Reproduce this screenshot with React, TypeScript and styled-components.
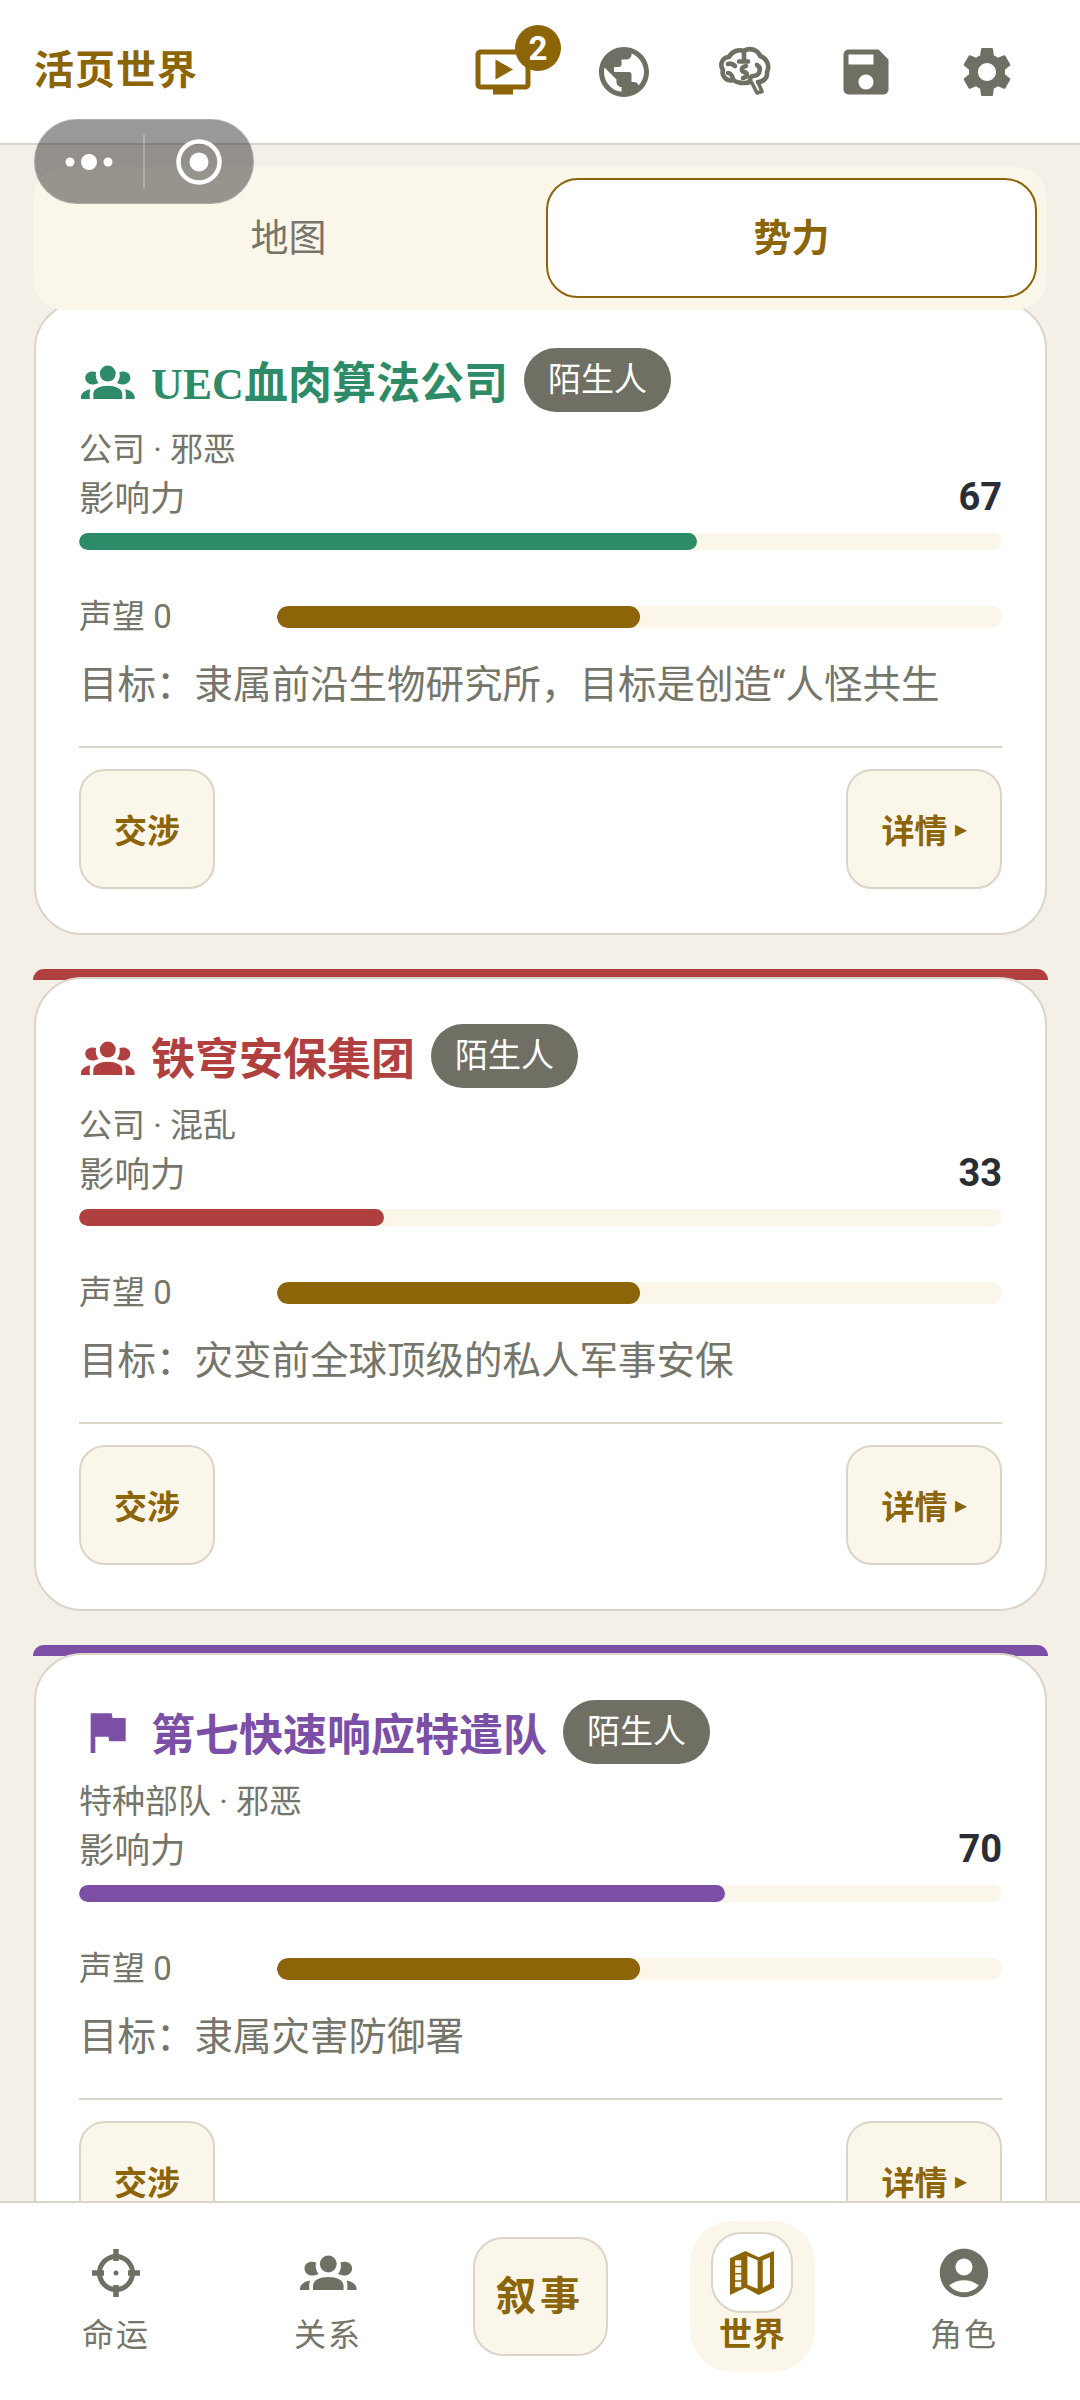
import React from "react";
import styled, { createGlobalStyle } from "styled-components";
import { MdOndemandVideo, MdPublic, MdSave, MdSettings, MdFlag, MdAccountCircle } from "react-icons/md";

const GOLD = "#8b6508";
const GRAY = "#6f6f63";
const TEXT = "#757569";
const LINE = "#dad5c8";
const CREAM = "#fbf6ea";
const SERIF = `"Liberation Serif", "Noto Sans CJK SC", serif`;
const SANS = `Roboto, "Noto Sans CJK SC", sans-serif`;

const Global = createGlobalStyle`
  html, body { margin: 0; padding: 0; background: #f4f0e8; }
  * { box-sizing: border-box; }
  body { font-family: ${SANS}; }
`;

const Page = styled.div`
  position: relative;
  width: 1080px;
  height: 2400px;
  display: flex;
  flex-direction: column;
  overflow: hidden;
  background: #f4f0e8;
`;

const Header = styled.header`
  flex: none;
  height: 145px;
  padding: 0 33px 0 34px;
  display: flex;
  align-items: center;
  justify-content: space-between;
  background: #fff;
  border-bottom: 2px solid ${LINE};
`;

const AppTitle = styled.h1`
  margin: 0 0 9px;
  font-family: ${SERIF};
  font-size: 40px;
  font-weight: 700;
  letter-spacing: 1px;
  color: ${GOLD};
`;

const HeaderIcons = styled.div`
  display: flex;
`;

const HeaderIcon = styled.div<{ $color?: string }>`
  position: relative;
  width: 121px;
  height: 143px;
  display: flex;
  align-items: center;
  justify-content: center;
  color: ${(p) => p.$color ?? GRAY};
`;

const CountBadge = styled.span`
  position: absolute;
  left: 73px;
  top: 25px;
  width: 46px;
  height: 46px;
  border-radius: 50%;
  display: flex;
  align-items: center;
  justify-content: center;
  background: ${GOLD};
  color: #fff;
  font-size: 33px;
  font-weight: 700;
`;

const Capsule = styled.div`
  position: absolute;
  z-index: 5;
  left: 34px;
  top: 119px;
  width: 220px;
  height: 85px;
  border-radius: 43px;
  border: 1px solid rgba(255, 255, 255, 0.2);
  background: rgba(18, 18, 18, 0.43);
  display: flex;
  align-items: center;
`;

const CapsuleSide = styled.div`
  flex: 1;
  display: flex;
  align-items: center;
  justify-content: center;
`;

const CapsuleRule = styled.span`
  width: 2px;
  height: 55px;
  background: rgba(255, 255, 255, 0.25);
`;

const Main = styled.main`
  flex: 1;
  min-height: 0;
  overflow: hidden;
  padding: 22px 33px 0 34px;
`;

const Tabs = styled.div`
  position: relative;
  z-index: 2;
  height: 143px;
  margin: 0 0 -17px -1px;
  padding: 11px 10px 12px;
  display: grid;
  grid-template-columns: 1fr 1fr;
  gap: 12px;
  background: ${CREAM};
  border-radius: 32px;
`;

const Tab = styled.div<{ $active?: boolean }>`
  display: flex;
  align-items: center;
  justify-content: center;
  padding-bottom: 7px;
  border-radius: 32px;
  font-size: 38px;
  font-weight: ${(p) => (p.$active ? 700 : 400)};
  color: ${(p) => (p.$active ? GOLD : TEXT)};
  background: ${(p) => (p.$active ? "#fff" : "transparent")};
  border: 2px solid ${(p) => (p.$active ? GOLD : "transparent")};
`;

const CardList = styled.div`
  display: flex;
  flex-direction: column;
  gap: 34px;
`;

const Shell = styled.section<{ $color: string }>`
  position: relative;
  padding-top: 8px;
  &::before {
    content: "";
    position: absolute;
    left: -1px;
    right: -1px;
    top: 0;
    height: 11px;
    border-radius: 12px 12px 0 0;
    background: ${(p) => p.$color};
  }
  &:first-child::before {
    display: none;
  }
`;

const Card = styled.div`
  position: relative;
  padding: 45px 43px 44px;
  background: #fff;
  border: 2px solid ${LINE};
  border-radius: 48px;
`;

const TitleRow = styled.div`
  display: flex;
  align-items: center;
  height: 64px;
`;

const TitleIcon = styled.span<{ $color: string; $drop: number }>`
  flex: none;
  width: 56px;
  margin-right: 16px;
  padding-top: ${(p) => p.$drop}px;
  display: flex;
  align-items: center;
  justify-content: center;
  color: ${(p) => p.$color};
`;

const FactionName = styled.h2<{ $color: string }>`
  margin: 0 16px 0 0;
  font-family: ${SERIF};
  font-size: 44px;
  font-weight: 700;
  color: ${(p) => p.$color};
`;

const Standing = styled.span`
  height: 64px;
  padding: 0 24px 6px;
  display: flex;
  align-items: center;
  border-radius: 32px;
  background: ${GRAY};
  color: #fff;
  font-size: 33px;
`;

const Meta = styled.div`
  margin-top: 14px;
  height: 46px;
  line-height: 48px;
  font-size: 33px;
  color: ${TEXT};
`;

const InfluenceRow = styled.div`
  height: 50px;
  display: flex;
  align-items: center;
  justify-content: space-between;
`;

const InfluenceLabel = styled.span`
  font-size: 35.5px;
  margin-top: -3px;
  color: ${TEXT};
`;

const InfluenceValue = styled.span`
  font-size: 38px;
  font-weight: 700;
  color: #2a2d33;
`;

const Track = styled.div<{ $h: number }>`
  flex: 1;
  height: ${(p) => p.$h}px;
  border-radius: ${(p) => p.$h / 2}px;
  background: ${CREAM};
  overflow: hidden;
`;

const Fill = styled.div<{ $color: string }>`
  height: 100%;
  border-radius: inherit;
  background: ${(p) => p.$color};
`;

const InfluenceTrack = styled.div`
  margin-top: 11px;
  display: flex;
`;

const RepRow = styled.div`
  margin-top: 43px;
  height: 48px;
  display: flex;
  align-items: center;
`;

const RepLabel = styled.span`
  flex: none;
  width: 198px;
  margin-top: -6px;
  font-size: 33px;
  color: ${TEXT};
`;

const Goal = styled.p`
  margin: 16px 0 33px;
  height: 56px;
  line-height: 56px;
  font-size: 38.5px;
  color: ${TEXT};
  white-space: nowrap;
  overflow: hidden;
`;

const Actions = styled.div`
  padding-top: 21px;
  border-top: 2px solid ${LINE};
  display: flex;
  justify-content: space-between;
`;

const ActionButton = styled.button<{ $w: number }>`
  width: ${(p) => p.$w}px;
  height: 120px;
  padding: 0;
  display: flex;
  align-items: center;
  justify-content: center;
  gap: 7px;
  font-family: ${SANS};
  font-size: 33px;
  font-weight: 700;
  color: ${GOLD};
  background: ${CREAM};
  border: 2px solid ${LINE};
  border-radius: 26px;
`;

const Caret = styled.span`
  font-size: 24px;
  font-weight: 400;
`;

const Nav = styled.nav`
  position: relative;
  z-index: 3;
  flex: none;
  height: 199px;
  padding: 18px 10px 0;
  display: grid;
  grid-template-columns: repeat(5, 1fr);
  background: #fff;
  border-top: 2px solid ${LINE};
`;

const NavItem = styled.div<{ $active?: boolean }>`
  justify-self: center;
  width: 125px;
  height: 151px;
  padding-top: 11px;
  display: flex;
  flex-direction: column;
  align-items: center;
  border-radius: 42px;
  background: ${(p) => (p.$active ? CREAM : "transparent")};
`;

const NavIcon = styled.div<{ $active?: boolean }>`
  width: 82px;
  height: 81px;
  display: flex;
  align-items: center;
  justify-content: center;
  color: ${(p) => (p.$active ? GOLD : GRAY)};
  background: ${(p) => (p.$active ? "#fff" : "transparent")};
  border: 2px solid ${(p) => (p.$active ? LINE : "transparent")};
  border-radius: 30px;
`;

const NavLabel = styled.span<{ $active?: boolean }>`
  height: 44px;
  line-height: 44px;
  white-space: nowrap;
  font-size: ${(p) => (p.$active ? 33 : 32)}px;
  letter-spacing: ${(p) => (p.$active ? 0 : 2)}px;
  font-weight: ${(p) => (p.$active ? 700 : 400)};
  color: ${(p) => (p.$active ? GOLD : TEXT)};
`;

const StoryButton = styled.button`
  justify-self: center;
  width: 135px;
  height: 119px;
  margin-top: 16px;
  padding: 0 0 8px;
  font-family: ${SERIF};
  font-size: 40px;
  font-weight: 700;
  letter-spacing: 4px;
  color: ${GOLD};
  background: ${CREAM};
  border: 2px solid ${LINE};
  border-radius: 30px;
`;

const GroupsIcon = ({ width }: { width: number }) => (
  <svg width={width} height={width * 0.62} viewBox="14 16 58 36" fill="currentColor">
    <circle cx="43.3" cy="25" r="8.4" />
    <path d="M31 23.500C25.500 21.500 19.500 24 19.500 29.500C19.500 34 23.500 37 28 36.500C30.500 36.200 32.500 35.600 33.500 35C31 32 30 27.500 31 23.500Z" />
    <path d="M55.600 23.500C61.100 21.500 67.100 24 67.100 29.500C67.100 34 63.100 37 58.600 36.500C56.100 36.200 54.100 35.600 53.100 35C55.600 32 56.600 27.500 55.600 23.500Z" />
    <path d="M28 52V47C28 41 35 38 43.300 38C51.600 38 58.600 41 58.600 47V52Z" />
    <path d="M15 52V49.500C15 45.500 19.500 42.500 25 41.500C24 44.500 24 48 24.500 52Z" />
    <path d="M71.600 52V49.500C71.600 45.500 67.100 42.500 61.600 41.500C62.600 44.500 62.600 48 62.100 52Z" />
  </svg>
);

const BrainIcon = () => (
  <svg width="60" height="60" viewBox="15 10 60 60" fill="none" stroke="currentColor" strokeWidth="4.6" strokeLinecap="round" strokeLinejoin="round">
    <path d="M50 50C44 52 37 51 33 48C27 50 21 44 23 38C19 32 23 25 29 25C32 19 39 17 44 19C50 15 58 18 60 24C67 26 70 34 67 40C68 46 63 50 58 50" />
    <path d="M52 51L57 61L62 59.500L58 50" strokeWidth="3.600" />
    <path d="M44 19V29M39 29.500H48" />
    <path d="M46 34C41 35 41 39 44 40C48 41 48 45 43 46" />
    <path d="M28 41C30 41 32 43 33 47" />
    <path d="M57 33C62 36 60 44 53 44C51 44 50 46 50 49" />
    <path d="M28 32C31 31 33 32 35 34" />
  </svg>
);

const TargetIcon = () => (
  <svg width="50" height="50" viewBox="0 0 50 50" fill="none" stroke="currentColor">
    <circle cx="25" cy="25" r="16.500" strokeWidth="5" />
    <path d="M25 1V13M25 37V49M1 25H13M37 25H49" strokeWidth="5.500" />
    <circle cx="25" cy="25" r="2.500" fill="currentColor" stroke="none" />
  </svg>
);

const MapIcon = () => (
  <svg width="44" height="44" viewBox="16 15 43 43">
    <path fill="currentColor" d="M16 22L31 15L44 21L59 15V51L44 58L31 51L16 58Z" />
    <path fill="#fff" d="M33 20L43 24V52L33 48ZM48 24L55 21V47L48 51Z" />
    <path fill="#fbf6ea" d="M21 24H27V29.500H21ZM21 31H27V36.500H21ZM21 38H27V43.500H21ZM21 45H27V50.500H21Z" />
  </svg>
);

const factions = [
  { name: "UEC血肉算法公司", color: "#2e8b67", meta: "公司 · 邪恶", influence: 67, goal: "目标：隶属前沿生物研究所，目标是创造“人怪共生", flag: false },
  { name: "铁穹安保集团", color: "#b04040", meta: "公司 · 混乱", influence: 33, goal: "目标：灾变前全球顶级的私人军事安保", flag: false },
  { name: "第七快速响应特遣队", color: "#7b4fa6", meta: "特种部队 · 邪恶", influence: 70, goal: "目标：隶属灾害防御署", flag: true },
];

export default function App() {
  return (
    <Page>
      <Global />
      <Header>
        <AppTitle>活页世界</AppTitle>
        <HeaderIcons>
          <HeaderIcon $color={GOLD}>
            <MdOndemandVideo size={60} />
            <CountBadge>2</CountBadge>
          </HeaderIcon>
          <HeaderIcon><MdPublic size={60} /></HeaderIcon>
          <HeaderIcon><BrainIcon /></HeaderIcon>
          <HeaderIcon><MdSave size={60} /></HeaderIcon>
          <HeaderIcon><MdSettings size={60} /></HeaderIcon>
        </HeaderIcons>
      </Header>

      <Capsule>
        <CapsuleSide>
          <svg width="48" height="20" viewBox="0 0 48 20" fill="#fff">
            <circle cx="5" cy="10" r="4.500" />
            <circle cx="24" cy="10" r="8" />
            <circle cx="43" cy="10" r="4.500" />
          </svg>
        </CapsuleSide>
        <CapsuleRule />
        <CapsuleSide>
          <svg width="46" height="46" viewBox="0 0 46 46" fill="none">
            <circle cx="23" cy="23" r="20.500" stroke="#fff" strokeWidth="4.500" />
            <circle cx="23" cy="23" r="9.500" fill="#fff" />
          </svg>
        </CapsuleSide>
      </Capsule>

      <Main>
        <Tabs>
          <Tab>地图</Tab>
          <Tab $active>势力</Tab>
        </Tabs>
        <CardList>
          {factions.map((f) => (
            <Shell key={f.name} $color={f.color}>
              <Card>
                <TitleRow>
                  <TitleIcon $color={f.color} $drop={f.flag ? 0 : 5}>
                    {f.flag ? <MdFlag size={56} /> : <GroupsIcon width={55} />}
                  </TitleIcon>
                  <FactionName $color={f.color}>{f.name}</FactionName>
                  <Standing>陌生人</Standing>
                </TitleRow>
                <Meta>{f.meta}</Meta>
                <InfluenceRow>
                  <InfluenceLabel>影响力</InfluenceLabel>
                  <InfluenceValue>{f.influence}</InfluenceValue>
                </InfluenceRow>
                <InfluenceTrack>
                  <Track $h={17}>
                    <Fill $color={f.color} style={{ width: `${f.influence}%` }} />
                  </Track>
                </InfluenceTrack>
                <RepRow>
                  <RepLabel>声望 0</RepLabel>
                  <Track $h={22}>
                    <Fill $color={GOLD} style={{ width: "50%" }} />
                  </Track>
                </RepRow>
                <Goal>{f.goal}</Goal>
                <Actions>
                  <ActionButton $w={136}>交涉</ActionButton>
                  <ActionButton $w={156}>详情<Caret>▸</Caret></ActionButton>
                </Actions>
              </Card>
            </Shell>
          ))}
        </CardList>
      </Main>

      <Nav>
        <NavItem>
          <NavIcon><TargetIcon /></NavIcon>
          <NavLabel>命运</NavLabel>
        </NavItem>
        <NavItem>
          <NavIcon><GroupsIcon width={58} /></NavIcon>
          <NavLabel>关系</NavLabel>
        </NavItem>
        <StoryButton>叙事</StoryButton>
        <NavItem $active>
          <NavIcon $active><MapIcon /></NavIcon>
          <NavLabel $active>世界</NavLabel>
        </NavItem>
        <NavItem>
          <NavIcon><MdAccountCircle size={58} /></NavIcon>
          <NavLabel>角色</NavLabel>
        </NavItem>
      </Nav>
    </Page>
  );
}
